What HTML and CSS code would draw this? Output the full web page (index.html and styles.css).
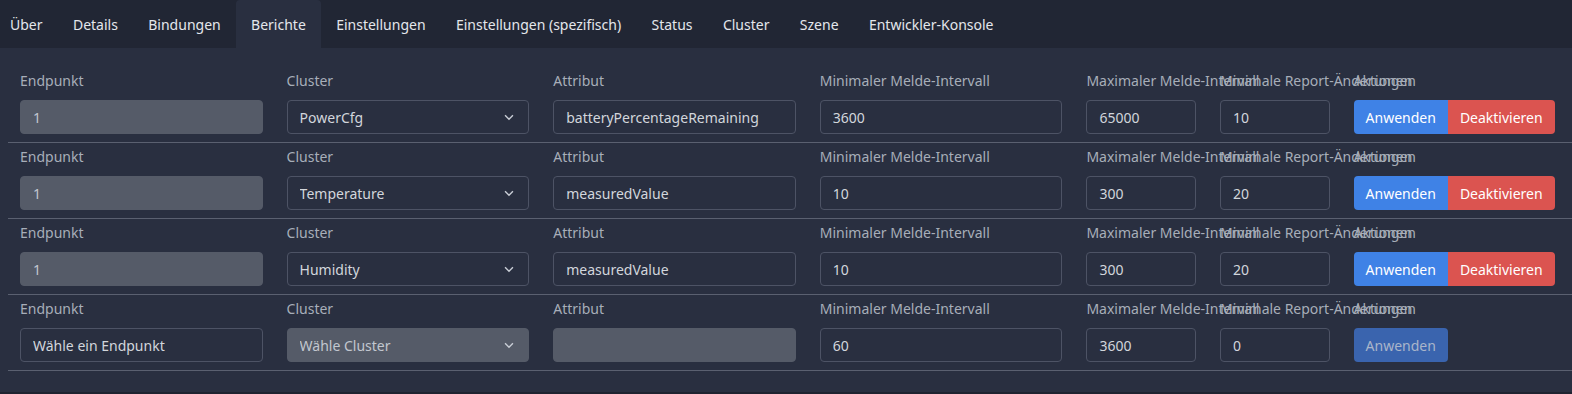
FILE: index.html
```html
<!DOCTYPE html>
<html lang="de">
<head>
    <meta charset="UTF-8">
    <meta name="viewport" content="width=device-width, initial-scale=1.0">
    <title>Gerät - Berichte</title>
    <link rel="stylesheet" href="styles.css">
</head>
<body>

    <!-- Tabs -->
    <nav class="tabs">
        <a class="tab">Über</a>
        <a class="tab">Details</a>
        <a class="tab">Bindungen</a>
        <a class="tab active">Berichte</a>
        <a class="tab">Einstellungen</a>
        <a class="tab">Einstellungen (spezifisch)</a>
        <a class="tab">Status</a>
        <a class="tab">Cluster</a>
        <a class="tab">Szene</a>
        <a class="tab">Entwickler-Konsole</a>
    </nav>

    <div class="content">

        <!-- Report 1 -->
        <div class="report-row">
            <div class="field">
                <label>Endpunkt</label>
                <input type="text" value="1" disabled>
            </div>
            <div class="field">
                <label>Cluster</label>
                <div class="select-wrap">
                    <select><option>PowerCfg</option></select>
                    <svg class="chevron" viewBox="0 0 16 16"><path d="M3.5 6l4.5 4.5L12.5 6"/></svg>
                </div>
            </div>
            <div class="field">
                <label>Attribut</label>
                <input type="text" value="batteryPercentageRemaining">
            </div>
            <div class="field">
                <label>Minimaler Melde-Intervall</label>
                <input type="text" value="3600">
            </div>
            <div class="field">
                <label>Maximaler Melde-Intervall</label>
                <input type="text" value="65000">
            </div>
            <div class="field">
                <label>Minimale Report-Änderungen</label>
                <input type="text" value="10">
            </div>
            <div class="field">
                <label>Aktionen</label>
                <div class="btn-group">
                    <button class="btn btn-primary">Anwenden</button>
                    <button class="btn btn-danger">Deaktivieren</button>
                </div>
            </div>
        </div>

        <!-- Report 2 -->
        <div class="report-row">
            <div class="field">
                <label>Endpunkt</label>
                <input type="text" value="1" disabled>
            </div>
            <div class="field">
                <label>Cluster</label>
                <div class="select-wrap">
                    <select><option>Temperature</option></select>
                    <svg class="chevron" viewBox="0 0 16 16"><path d="M3.5 6l4.5 4.5L12.5 6"/></svg>
                </div>
            </div>
            <div class="field">
                <label>Attribut</label>
                <input type="text" value="measuredValue">
            </div>
            <div class="field">
                <label>Minimaler Melde-Intervall</label>
                <input type="text" value="10">
            </div>
            <div class="field">
                <label>Maximaler Melde-Intervall</label>
                <input type="text" value="300">
            </div>
            <div class="field">
                <label>Minimale Report-Änderungen</label>
                <input type="text" value="20">
            </div>
            <div class="field">
                <label>Aktionen</label>
                <div class="btn-group">
                    <button class="btn btn-primary">Anwenden</button>
                    <button class="btn btn-danger">Deaktivieren</button>
                </div>
            </div>
        </div>

        <!-- Report 3 -->
        <div class="report-row">
            <div class="field">
                <label>Endpunkt</label>
                <input type="text" value="1" disabled>
            </div>
            <div class="field">
                <label>Cluster</label>
                <div class="select-wrap">
                    <select><option>Humidity</option></select>
                    <svg class="chevron" viewBox="0 0 16 16"><path d="M3.5 6l4.5 4.5L12.5 6"/></svg>
                </div>
            </div>
            <div class="field">
                <label>Attribut</label>
                <input type="text" value="measuredValue">
            </div>
            <div class="field">
                <label>Minimaler Melde-Intervall</label>
                <input type="text" value="10">
            </div>
            <div class="field">
                <label>Maximaler Melde-Intervall</label>
                <input type="text" value="300">
            </div>
            <div class="field">
                <label>Minimale Report-Änderungen</label>
                <input type="text" value="20">
            </div>
            <div class="field">
                <label>Aktionen</label>
                <div class="btn-group">
                    <button class="btn btn-primary">Anwenden</button>
                    <button class="btn btn-danger">Deaktivieren</button>
                </div>
            </div>
        </div>

        <!-- New report -->
        <div class="report-row">
            <div class="field">
                <label>Endpunkt</label>
                <input type="text" value="Wähle ein Endpunkt">
            </div>
            <div class="field">
                <label>Cluster</label>
                <div class="select-wrap">
                    <select disabled><option>Wähle Cluster</option></select>
                    <svg class="chevron" viewBox="0 0 16 16"><path d="M3.5 6l4.5 4.5L12.5 6"/></svg>
                </div>
            </div>
            <div class="field">
                <label>Attribut</label>
                <input type="text" value="" disabled>
            </div>
            <div class="field">
                <label>Minimaler Melde-Intervall</label>
                <input type="text" value="60">
            </div>
            <div class="field">
                <label>Maximaler Melde-Intervall</label>
                <input type="text" value="3600">
            </div>
            <div class="field">
                <label>Minimale Report-Änderungen</label>
                <input type="text" value="0">
            </div>
            <div class="field">
                <label>Aktionen</label>
                <div class="btn-group">
                    <button class="btn btn-primary" disabled>Anwenden</button>
                </div>
            </div>
        </div>

    </div>

</body>
</html>
```

FILE: styles.css
```css
:root {
    --bar: #212634;
    --panel: #292f40;
    --border: #4d5365;
    --line: #5a6070;
    --disabled: #555b68;
    --label: #a7aeb9;
    --text: #d2d6dc;
    --blue: #3f82e6;
    --red: #db5450;
}
body {
    font-family: "Noto Sans", "Open Sans", sans-serif;
    font-size: 14px;
    margin: 0;
    padding: 0;
    background-color: #1f2330;
    color: var(--text);
    overflow: hidden;
}
.tabs {
    display: flex;
    height: 48px;
    background-color: var(--bar);
}
.tab {
    display: flex;
    align-items: center;
    padding: 0 15.2px;
    color: #e4e7ec;
    border-radius: 4px 4px 0 0;
    white-space: nowrap;
}
.tab:first-child {
    padding-left: 10px;
}
.tab.active {
    background-color: var(--panel);
}
.content {
    background-color: var(--panel);
    padding: 19px 0 21px;
}
.report-row {
    display: grid;
    grid-template-columns: repeat(4, 242.6px) 109.6px 109.6px 1fr;
    column-gap: 24px;
    margin-left: 8px;
    padding: 2px 12px 8px;
    border-bottom: 1px solid var(--line);
}
.field {
    min-width: 0;
}
.field label {
    display: block;
    line-height: 24px;
    margin-bottom: 7px;
    color: var(--label);
    white-space: nowrap;
}
.field input,
.field select {
    display: block;
    width: 100%;
    height: 34px;
    box-sizing: border-box;
    padding: 0 12px;
    border: 1px solid var(--border);
    border-radius: 4px;
    background-color: var(--panel);
    color: var(--text);
    font: inherit;
    outline: none;
}
.field input:disabled,
.field select:disabled {
    background-color: var(--disabled);
    border-color: var(--disabled);
    color: #c2c7cf;
    -webkit-text-fill-color: #c2c7cf;
    opacity: 1;
}
.select-wrap {
    position: relative;
}
.field select {
    appearance: none;
    -webkit-appearance: none;
}
.chevron {
    position: absolute;
    right: 13px;
    top: 10px;
    width: 14px;
    height: 14px;
    fill: none;
    stroke: #c9ced6;
    stroke-width: 1.6;
    pointer-events: none;
}
.btn-group {
    display: flex;
}
.btn {
    height: 34px;
    padding: 0 12px;
    border: none;
    font: inherit;
    color: #ffffff;
    cursor: pointer;
}
.btn:first-child {
    border-radius: 4px 0 0 4px;
}
.btn:last-child {
    border-radius: 0 4px 4px 0;
}
.btn:only-child {
    border-radius: 4px;
}
.btn-primary {
    background-color: var(--blue);
}
.btn-primary:disabled {
    background-color: #3a64ae;
    color: #a9b5ca;
    cursor: default;
}
.btn-danger {
    background-color: var(--red);
}
```
